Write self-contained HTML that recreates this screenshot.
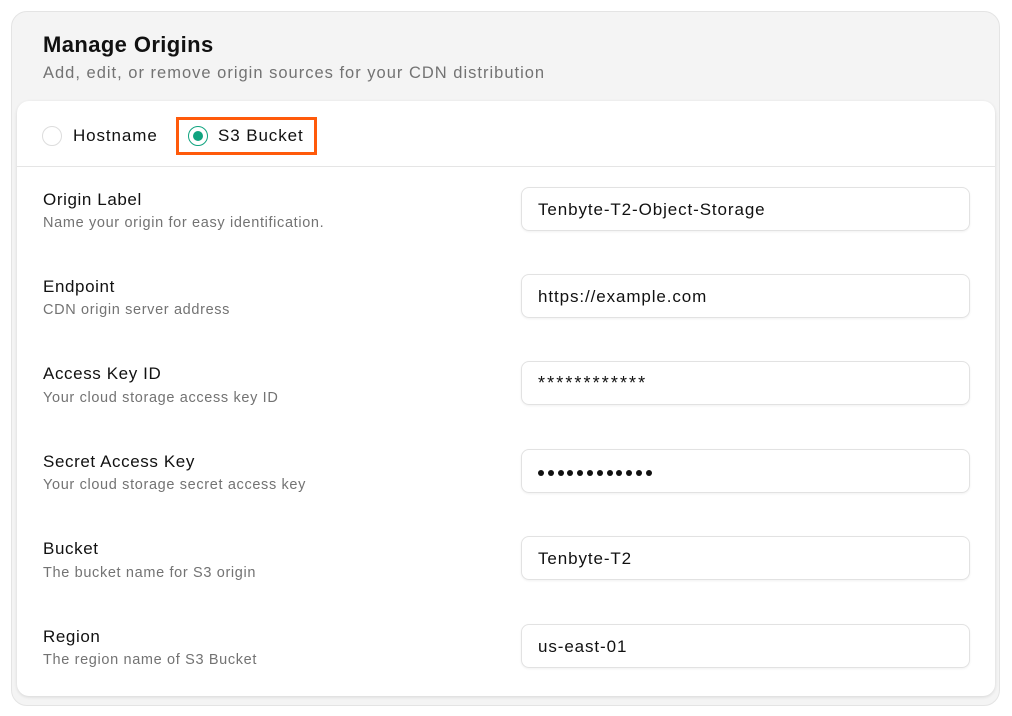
<!DOCTYPE html>
<html><head><style>
*{box-sizing:border-box;margin:0;padding:0}
body{width:1012px;height:716px;background:#fff;font-family:"Liberation Sans",sans-serif;position:relative;overflow:hidden}
.outer{position:absolute;left:11px;top:11px;width:989px;height:695px;background:#f4f4f4;border:1px solid #e4e4e4;border-radius:16px}
h1{position:absolute;left:43px;top:32px;font-size:22px;font-weight:bold;color:#111;letter-spacing:0.4px}
.sub{position:absolute;left:43px;top:64px;font-size:16.5px;color:#737373;letter-spacing:1px}
.inner{position:absolute;left:17px;top:101px;width:978px;height:595px;background:#fff;border-radius:12px;box-shadow:0 1px 3px rgba(0,0,0,.12)}
.div{position:absolute;left:17px;top:166px;width:978px;height:1px;background:#e5e5e5}
.radio{position:absolute;width:20px;height:20px;border-radius:50%;border:1px solid #ddd;background:#fff}
.rl{position:absolute;font-size:17px;color:#111;letter-spacing:0.9px}
.box{position:absolute;left:176px;top:117px;width:141px;height:38px;border:3px solid #ff5a0a}
.lab{position:absolute;left:43px;font-size:17px;color:#111;letter-spacing:0.6px}
.desc{position:absolute;left:43px;font-size:14.5px;color:#737373;letter-spacing:0.65px}
.inp{position:absolute;left:521px;width:449px;height:44px;border:1px solid #e2e2e2;border-radius:8px;box-shadow:0 1px 2px rgba(0,0,0,.06);font-size:17px;color:#111;padding-left:16px;line-height:43px;letter-spacing:0.9px}
.dot{display:inline-block;width:6px;height:6px;border-radius:50%;background:#111;margin-right:3.8px;vertical-align:middle}
</style></head><body>
<div class="outer"></div>
<h1>Manage Origins</h1>
<div class="sub">Add, edit, or remove origin sources for your CDN distribution</div>
<div class="inner"></div>
<div class="div"></div>
<div class="radio" style="left:42px;top:126px"></div>
<div class="rl" style="left:73px;top:126px">Hostname</div>
<div class="box"></div>
<div class="radio" style="left:188px;top:126px;border:1.5px solid #10a37f"><div style="position:absolute;left:3.5px;top:3.5px;width:10px;height:10px;border-radius:50%;background:#10a37f"></div></div>
<div class="rl" style="left:218px;top:126px">S3 Bucket</div>

<div class="lab" style="top:190px">Origin Label</div><div class="desc" style="top:215px">Name your origin for easy identification.</div>
<div class="inp" style="top:187px">Tenbyte-T2-Object-Storage</div>
<div class="lab" style="top:277px">Endpoint</div><div class="desc" style="top:302px">CDN origin server address</div>
<div class="inp" style="top:274px">https://example.com</div>
<div class="lab" style="top:364px">Access Key ID</div><div class="desc" style="top:390px">Your cloud storage access key ID</div>
<div class="inp" style="top:361px;letter-spacing:2.1px;font-size:18px">************</div>
<div class="lab" style="top:452px">Secret Access Key</div><div class="desc" style="top:477px">Your cloud storage secret access key</div>
<div class="inp" style="top:449px"><span class="dot"></span><span class="dot"></span><span class="dot"></span><span class="dot"></span><span class="dot"></span><span class="dot"></span><span class="dot"></span><span class="dot"></span><span class="dot"></span><span class="dot"></span><span class="dot"></span><span class="dot"></span></div>
<div class="lab" style="top:539px">Bucket</div><div class="desc" style="top:565px">The bucket name for S3 origin</div>
<div class="inp" style="top:536px">Tenbyte-T2</div>
<div class="lab" style="top:627px">Region</div><div class="desc" style="top:652px">The region name of S3 Bucket</div>
<div class="inp" style="top:624px">us-east-01</div>
</body></html>
